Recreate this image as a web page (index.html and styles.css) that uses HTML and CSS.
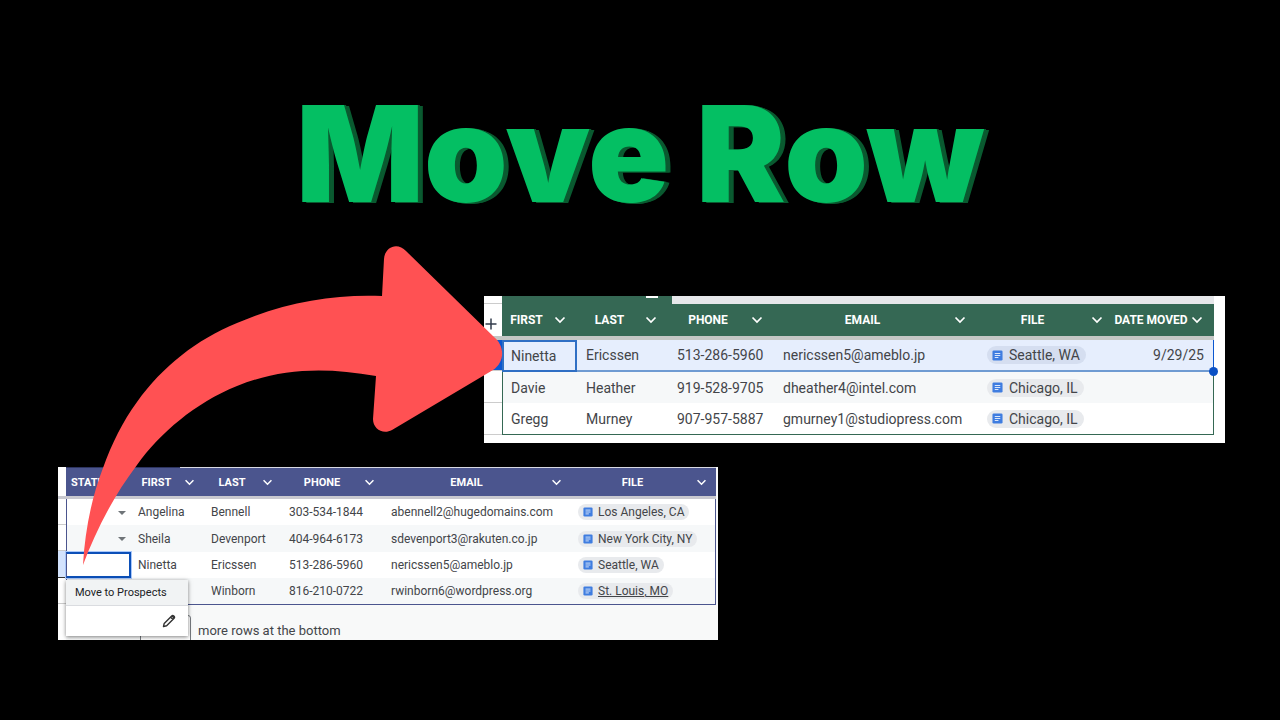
FILE: index.html
```
<!DOCTYPE html>
<html lang="en">
<head>
    <meta charset="UTF-8">
    <meta name="viewport" content="width=device-width, initial-scale=1.0">
    <title>Move Row</title>
    <link rel="stylesheet" href="styles.css">
</head>
<body>
    <svg class="defs" width="0" height="0" aria-hidden="true">
        <symbol id="chevron" viewBox="0 0 12 8">
            <path d="M1.5 1.5 6 6l4.500-4.500" fill="none" stroke="currentColor" stroke-width="1.700"/>
        </symbol>
        <symbol id="doc" viewBox="0 0 12 12">
            <rect x="0.500" y="0.500" width="11" height="11" rx="1.500" fill="#3f7de0"/>
            <path d="M3 3.700h6M3 6h6M3 8.300h4" stroke="#dce8fb" stroke-width="1.100"/>
        </symbol>
    </svg>

    <main class="slide">
        <h1 class="title">Move Row</h1>

        <section class="sheet prospects">
            <div class="gutter">
                <div class="gutter-top"></div>
                <div class="gutter-add">
                    <svg width="12" height="12" viewBox="0 0 12 12"><path d="M6 .5v11M.5 6h11" stroke="#333c4c" stroke-width="1.500"/></svg>
                </div>
                <div class="gutter-cell active"></div>
                <div class="gutter-cell"></div>
                <div class="gutter-cell"></div>
            </div>
            <div class="content">
                <div class="tab-strip"><span class="tab"></span></div>
                <table>
                    <thead>
                        <tr>
                            <th class="col-first"><button><span>FIRST</span><svg><use href="#chevron"/></svg></button></th>
                            <th class="col-last"><button><span>LAST</span><svg><use href="#chevron"/></svg></button></th>
                            <th class="col-phone"><button><span>PHONE</span><svg><use href="#chevron"/></svg></button></th>
                            <th><button><span>EMAIL</span><svg><use href="#chevron"/></svg></button></th>
                            <th class="col-file"><button><span>FILE</span><svg><use href="#chevron"/></svg></button></th>
                            <th class="col-date"><button><span>DATE MOVED</span><svg><use href="#chevron"/></svg></button></th>
                        </tr>
                    </thead>
                    <tbody>
                        <tr class="selected">
                            <td class="focus">Ninetta</td>
                            <td>Ericssen</td>
                            <td>513-286-5960</td>
                            <td>nericssen5@ameblo.jp</td>
                            <td><a class="chip" href="#"><svg><use href="#doc"/></svg>Seattle, WA</a></td>
                            <td class="date">9/29/25<span class="handle"></span></td>
                        </tr>
                        <tr>
                            <td>Davie</td>
                            <td>Heather</td>
                            <td>919-528-9705</td>
                            <td>dheather4@intel.com</td>
                            <td><a class="chip" href="#"><svg><use href="#doc"/></svg>Chicago, IL</a></td>
                            <td></td>
                        </tr>
                        <tr>
                            <td>Gregg</td>
                            <td>Murney</td>
                            <td>907-957-5887</td>
                            <td>gmurney1@studiopress.com</td>
                            <td><a class="chip" href="#"><svg><use href="#doc"/></svg>Chicago, IL</a></td>
                            <td></td>
                        </tr>
                    </tbody>
                </table>
            </div>
        </section>

        <section class="sheet leads">
            <div class="gutter">
                <div class="gutter-head"></div>
                <div class="gutter-cell"></div>
                <div class="gutter-cell"></div>
                <div class="gutter-cell active"></div>
                <div class="gutter-cell"></div>
            </div>
            <div class="content">
                <div class="tab-strip"><span class="tab"></span></div>
                <table>
                    <thead>
                        <tr>
                            <th class="col-status"><button><span>STATUS</span></button></th>
                            <th class="col-first"><button><span>FIRST</span><svg><use href="#chevron"/></svg></button></th>
                            <th class="col-last"><button><span>LAST</span><svg><use href="#chevron"/></svg></button></th>
                            <th class="col-phone"><button><span>PHONE</span><svg><use href="#chevron"/></svg></button></th>
                            <th><button><span>EMAIL</span><svg><use href="#chevron"/></svg></button></th>
                            <th class="col-file"><button><span>FILE</span><svg><use href="#chevron"/></svg></button></th>
                        </tr>
                    </thead>
                    <tbody>
                        <tr>
                            <td><button class="caret" aria-label="Choose status"></button></td>
                            <td>Angelina</td>
                            <td>Bennell</td>
                            <td>303-534-1844</td>
                            <td>abennell2@hugedomains.com</td>
                            <td><a class="chip" href="#"><svg><use href="#doc"/></svg>Los Angeles, CA</a></td>
                        </tr>
                        <tr>
                            <td><button class="caret" aria-label="Choose status"></button></td>
                            <td>Sheila</td>
                            <td>Devenport</td>
                            <td>404-964-6173</td>
                            <td>sdevenport3@rakuten.co.jp</td>
                            <td><a class="chip" href="#"><svg><use href="#doc"/></svg>New York City, NY</a></td>
                        </tr>
                        <tr>
                            <td class="editing">
                                <div class="menu">
                                    <button class="menu-item">Move to Prospects</button>
                                    <button class="menu-edit" aria-label="Edit">
                                        <svg width="14" height="14" viewBox="0 0 14 14">
                                            <path d="M1.500 12.500l.7-3.100 7.500-7.500c.6-.6 1.400-.6 2 0l.4.4c.6.6.6 1.400 0 2l-7.500 7.500zM8.500 3.100l2.400 2.400" fill="none" stroke="#333" stroke-width="1.400" stroke-linejoin="round"/>
                                            <path d="M9.300 2.300l1.500-1 2 2-1.100 1.500z" fill="#333"/>
                                        </svg>
                                    </button>
                                </div>
                            </td>
                            <td>Ninetta</td>
                            <td>Ericssen</td>
                            <td>513-286-5960</td>
                            <td>nericssen5@ameblo.jp</td>
                            <td><a class="chip" href="#"><svg><use href="#doc"/></svg>Seattle, WA</a></td>
                        </tr>
                        <tr>
                            <td></td>
                            <td></td>
                            <td>Winborn</td>
                            <td>816-210-0722</td>
                            <td>rwinborn6@wordpress.org</td>
                            <td><a class="chip linked" href="#"><svg><use href="#doc"/></svg>St. Louis, MO</a></td>
                        </tr>
                    </tbody>
                </table>
                <div class="add-rows">
                    <input id="rows" type="text">
                    <label for="rows">more rows at the bottom</label>
                </div>
            </div>
        </section>

        <svg class="arrow" width="430" height="330" viewBox="78 240 430 330" aria-hidden="true">
            <path fill="#ff5153" d="M83 565C85 530 92 496 103 468C112 443 123 421 137 402C163 366 196 340 237 323C285 302 335 294 382 296L384 259C385 246 398 242 406 251L494 337C505 346 505 362 493 370L392 430C383 435 373 429 373 419L376 376C325 367 282 368 237 386C195 403 160 433 137 465C112 498 95 533 83 565Z"/>
        </svg>
    </main>
</body>
</html>
```
FILE: styles.css
```
* {
    box-sizing: border-box;
}
body {
    margin: 0;
    background-color: #000;
    font-family: Roboto, "Liberation Sans", sans-serif;
    color: #434549;
}
button {
    border: none;
    background: none;
    padding: 0;
    font: inherit;
    color: inherit;
    cursor: pointer;
}
.defs {
    position: absolute;
}
.slide {
    position: relative;
    min-height: 100vh;
    padding-top: 72px;
}
.title {
    margin: 0;
    height: 224px;
    text-align: center;
    font-family: Inter, sans-serif;
    font-weight: 900;
    font-size: 134px;
    line-height: 162px;
    color: #04bf63;
    text-shadow: 2px 0 #0a5a30, 4px 1px #0a5a30, 5px 1px #0a5a30;
}

/* shared sheet parts */
.sheet {
    display: flex;
    background-color: #fff;
}
.gutter {
    flex: none;
}
.content {
    flex: 1;
    min-width: 0;
}
table {
    width: 100%;
    table-layout: fixed;
    border-collapse: separate;
    border-spacing: 0;
}
th {
    padding: 0;
    color: #fff;
    font-weight: 700;
    white-space: nowrap;
}
th button {
    display: flex;
    align-items: center;
    width: 100%;
}
th span {
    flex: 1;
    text-align: center;
}
th svg {
    flex: none;
    width: 12px;
    height: 8px;
}
td {
    white-space: nowrap;
}
tbody tr:nth-child(even) {
    background-color: #f6f8f9;
}
.chip {
    display: inline-flex;
    align-items: center;
    border-radius: 10px;
    background-color: #e8eaed;
    color: inherit;
    text-decoration: none;
    vertical-align: middle;
}
.chip.linked {
    text-decoration: underline;
}

/* prospects sheet */
.prospects {
    margin: 0 55px 0 484px;
    padding: 0 11px 8px 0;
    font-size: 14px;
}
.prospects .gutter {
    width: 18px;
}
.gutter-top {
    height: 8px;
    border-bottom: 1px solid #ccc;
}
.gutter-add {
    height: 36px;
    padding: 13px 0 0 1px;
    border-bottom: 4px solid #c4c7c5;
}
.prospects .gutter-cell {
    height: 32px;
    border-bottom: 1px solid #ccc;
}
.prospects .gutter-cell.active {
    height: 31px;
    background-color: #0b57d0;
}
.prospects .tab-strip {
    height: 8px;
    background-color: #e6e7ea;
}
.prospects .tab {
    display: block;
    width: 170px;
    height: 8px;
    background: linear-gradient(#fff, #fff) 144px 0 / 12px 2px no-repeat #356854;
}
.prospects .col-first { width: 75px; }
.prospects .col-last { width: 91px; }
.prospects .col-phone { width: 106px; }
.prospects .col-file { width: 137px; }
.prospects .col-date { width: 100px; }
.prospects th {
    height: 36px;
    background-color: #356854;
    border-bottom: 4px solid #c4c7c5;
    font-size: 12px;
}
.prospects th button {
    height: 32px;
    padding-right: 11px;
}
.prospects th svg {
    margin-left: 3px;
}
.prospects td {
    height: 31px;
    padding: 0 9px;
}
.prospects .selected td {
    height: 32px;
    background-color: #e6eefd;
    border-bottom: 2px solid #6f9bd2;
}
.prospects td:first-child {
    border-left: 1px solid #356854;
    padding-left: 8px;
}
.prospects td:last-child {
    border-right: 1px solid #356854;
}
.prospects tr:last-child td {
    height: 32px;
    border-bottom: 1px solid #356854;
}
.prospects .selected .focus {
    border: 2px solid #2f6fc4;
    padding-left: 7px;
}
.prospects .selected .date {
    position: relative;
    text-align: right;
    border-right-color: #0b57d0;
}
.handle {
    position: absolute;
    right: -5px;
    bottom: -6px;
    width: 9px;
    height: 9px;
    border-radius: 50%;
    background-color: #0b50c4;
}
.prospects .chip {
    height: 18px;
    margin-left: 1px;
    padding: 0 6px 0 5px;
    gap: 6px;
}
.prospects .selected .chip {
    background-color: #d5def0;
}
.prospects .chip svg {
    width: 11px;
    height: 11px;
}

/* leads sheet */
.leads {
    margin: 24px 562px 0 58px;
    padding-right: 2px;
    background-color: #f8f9f9;
    font-size: 12px;
}
.leads .gutter {
    width: 8px;
    background-color: #fff;
}
.gutter-head {
    height: 32px;
    border-bottom: 3px solid #c9c9d0;
}
.leads .gutter-cell {
    height: 26px;
    border-bottom: 1px solid #ccc;
}
.leads .gutter-cell.active {
    height: 27px;
    background-color: #d3e3fd;
    border-color: #333;
}
.leads .tab-strip {
    height: 1px;
    background-color: #d8d9e4;
}
.leads .tab {
    display: block;
    width: 114px;
    height: 1px;
    background-color: #2d3460;
}
.leads .col-status { width: 65px; }
.leads .col-first { width: 73px; }
.leads .col-last { width: 78px; }
.leads .col-phone { width: 102px; }
.leads .col-file { width: 145px; }
.leads th {
    height: 31px;
    background-color: #4b558e;
    border-bottom: 3px solid #c9c9d0;
    font-size: 11px;
}
.leads th button {
    height: 28px;
    padding-right: 9px;
}
.leads th svg {
    width: 11px;
    height: 7px;
    margin-left: 2px;
}
.leads .col-status span {
    padding-left: 5px;
    text-align: left;
}
.leads td {
    height: 26px;
    padding: 0 7px;
}
.leads tbody tr:nth-child(even) td {
    height: 27px;
}
.leads tbody tr:nth-child(odd) {
    background-color: #fff;
}
.leads td:first-child {
    border-left: 1px solid #4b558e;
    padding-right: 5px;
    text-align: right;
}
.leads td:last-child {
    border-right: 1px solid #4b558e;
}
.leads tr:last-child td {
    border-bottom: 1px solid #4b558e;
}
.caret {
    border: 4px solid transparent;
    border-top-color: #6f7478;
    border-bottom: none;
    vertical-align: middle;
}
.leads .chip {
    height: 16px;
    padding: 0 5px;
    gap: 5px;
}
.leads .chip svg {
    width: 10px;
    height: 10px;
}
.leads .editing {
    position: relative;
    border: 2px solid #0b4fb8;
    outline: 1px solid #a8c7fa;
    background-color: #fff;
}
.menu {
    position: absolute;
    top: 26px;
    left: -1px;
    z-index: 1;
    width: 122px;
    background-color: #fff;
    box-shadow: 0 1px 4px rgba(0,0,0,0.5);
}
.menu-item {
    display: block;
    width: 100%;
    height: 26px;
    padding-left: 9px;
    border-bottom: 1px solid #dadce0;
    background-color: #f1f3f4;
    font-size: 11px;
    line-height: 22px;
    text-align: left;
    color: #202124;
}
.menu-edit {
    display: flex;
    align-items: center;
    justify-content: flex-end;
    width: 100%;
    height: 30px;
    padding-right: 12px;
}
.add-rows {
    display: flex;
    align-items: center;
    gap: 7px;
    height: 35px;
    padding: 10px 0 0 74px;
    overflow: hidden;
}
.add-rows input {
    flex: none;
    width: 51px;
    height: 32px;
    align-self: flex-start;
    border: 1px solid #777b80;
    border-radius: 3px;
    background-color: #fff;
}
.add-rows label {
    padding-top: 6px;
    font-size: 13px;
}

/* arrow lies over both sheets */
.arrow {
    position: absolute;
    top: 240px;
    left: 78px;
    z-index: 2;
    pointer-events: none;
}
```
